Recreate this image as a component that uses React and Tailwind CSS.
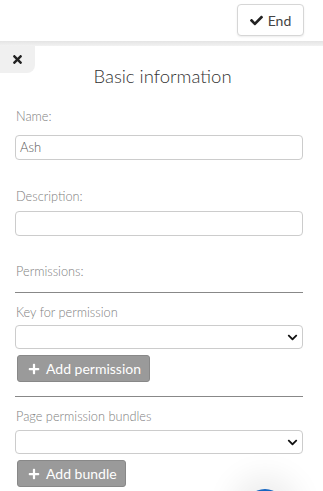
import React from 'react'

const font = { fontFamily: 'Lato, "Open Sans", sans-serif' }

function Chevron() {
  return (
    <svg viewBox="0 0 448 512" className="w-[11px] h-[11px]" fill="#111">
      <path d="M207 381.5L12.7 187.1c-9.4-9.4-9.4-24.6 0-33.9l22.7-22.7c9.4-9.4 24.5-9.4 33.9 0L224 284.5l154.7-154c9.4-9.3 24.5-9.3 33.9 0l22.7 22.7c9.4 9.4 9.4 24.6 0 33.9L241 381.5c-9.4 9.4-24.6 9.4-34 0z" />
    </svg>
  )
}

function Plus() {
  return (
    <svg viewBox="0 0 448 512" className="w-[12px] h-[12px]" fill="#fff">
      <path d="M416 208H272V64c0-17.7-14.3-32-32-32h-32c-17.7 0-32 14.3-32 32v144H32c-17.7 0-32 14.3-32 32v32c0 17.7 14.3 32 32 32h144v144c0 17.7 14.3 32 32 32h32c17.7 0 32-14.3 32-32V304h144c17.7 0 32-14.3 32-32v-32c0-17.7-14.3-32-32-32z" />
    </svg>
  )
}

function Select() {
  return (
    <div className="h-[24px] border border-[#ccc] rounded-[4px] bg-white flex items-center justify-end pr-[4px]">
      <Chevron />
    </div>
  )
}

function AddButton({ label, width }) {
  return (
    <div
      className={`h-[27px] ${width} ml-[2px] mt-[6px] rounded-[3px] bg-[#9a9a9a] border border-[#888] flex items-center gap-[6px] pl-[10px] text-[14px] text-white`}
    >
      <Plus />
      <span>{label}</span>
    </div>
  )
}

export default function App() {
  return (
    <div className="relative w-[323px] h-[491px] overflow-hidden bg-white" style={font}>
      {/* top bar */}
      <div className="h-[41px] flex items-start justify-end pr-[19px] pt-[4px]">
        <div className="h-[32px] w-[67px] border border-[#d6d6d6] rounded-[4px] bg-white shadow-[0_1px_2px_rgba(0,0,0,0.08)] flex items-center justify-center gap-[5px] text-[14px] text-[#444]">
          <svg viewBox="0 0 512 512" className="w-[13px] h-[13px]" fill="#222">
            <path d="M173.9 439.4l-166.4-166.4c-10-10-10-26.2 0-36.2l36.2-36.2c10-10 26.2-10 36.2 0L192 312.7 432.1 72.6c10-10 26.2-10 36.2 0l36.2 36.2c10 10 10 26.2 0 36.2L210.1 439.4c-10 10-26.2 10-36.2 0z" />
          </svg>
          <span>End</span>
        </div>
      </div>
      <div className="h-[5px] bg-gradient-to-b from-[#e4e4e4] to-[#f2f2f2]" />

      {/* panel */}
      <div className="relative">
        <div className="absolute left-0 top-0 w-[35px] h-[27px] bg-[#f0f0f0] rounded-br-[8px] flex items-center justify-center">
          <svg viewBox="0 0 352 512" className="w-[11px] h-[13px]" fill="#222">
            <path d="M242.7 256l100.1-100.1c12.3-12.3 12.3-32.2 0-44.5l-22.2-22.2c-12.3-12.3-32.2-12.3-44.5 0L176 189.3 75.9 89.2c-12.3-12.3-32.2-12.3-44.5 0L9.2 111.5c-12.3 12.3-12.3 32.2 0 44.5L109.3 256 9.2 356.1c-12.3 12.3-12.3 32.2 0 44.5l22.2 22.2c12.3 12.3 32.2 12.3 44.5 0L176 322.7l100.1 100.1c12.3 12.3 32.2 12.3 44.5 0l22.2-22.2c12.3-12.3 12.3-32.2 0-44.5L242.7 256z" />
          </svg>
        </div>

        <div className="pt-[18px] text-center text-[18.5px] font-light text-[#333] leading-[24px] pl-[2px]">Basic information</div>

        <div className="px-[15px] pr-[20px] mt-[20px]">
          <div className="text-[12.75px] font-light text-[#808080] leading-[16px] pl-[1px]">Name:</div>
          <div className="mt-[11px] h-[25px] border border-[#ccc] rounded-[4px] flex items-center pl-[4px] text-[13px] font-light text-[#555]">Ash</div>

          <div className="mt-[28px] text-[12.75px] font-light text-[#808080] leading-[16px] pl-[1px]">Description:</div>
          <div className="mt-[7px] h-[25px] border border-[#ccc] rounded-[4px]" />

          <div className="mt-[27px] text-[12.75px] font-light text-[#808080] leading-[16px] pl-[1px]">Permissions:</div>
          <div className="mt-[13px] border-t border-[#888]" />

          <div className="mt-[11px] text-[12.75px] font-light text-[#808080] leading-[16px] pl-[1px]">Key for permission</div>
          <div className="mt-[5px]"><Select /></div>
          <AddButton label="Add permission" width="w-[133px]" />

          <div className="mt-[14px] border-t border-[#888]" />
          <div className="mt-[11px] text-[12.75px] font-light text-[#808080] leading-[16px] pl-[1px]">Page permission bundles</div>
          <div className="mt-[6px]"><Select /></div>
          <AddButton label="Add bundle" width="w-[109px]" />
        </div>
      </div>

      {/* floating button peeking at bottom */}
      <div className="absolute left-[245px] top-[489px] w-[40px] h-[40px] rounded-full bg-[#1565c0] shadow-[0_0_30px_14px_rgba(0,0,0,0.07)]" />
    </div>
  )
}
